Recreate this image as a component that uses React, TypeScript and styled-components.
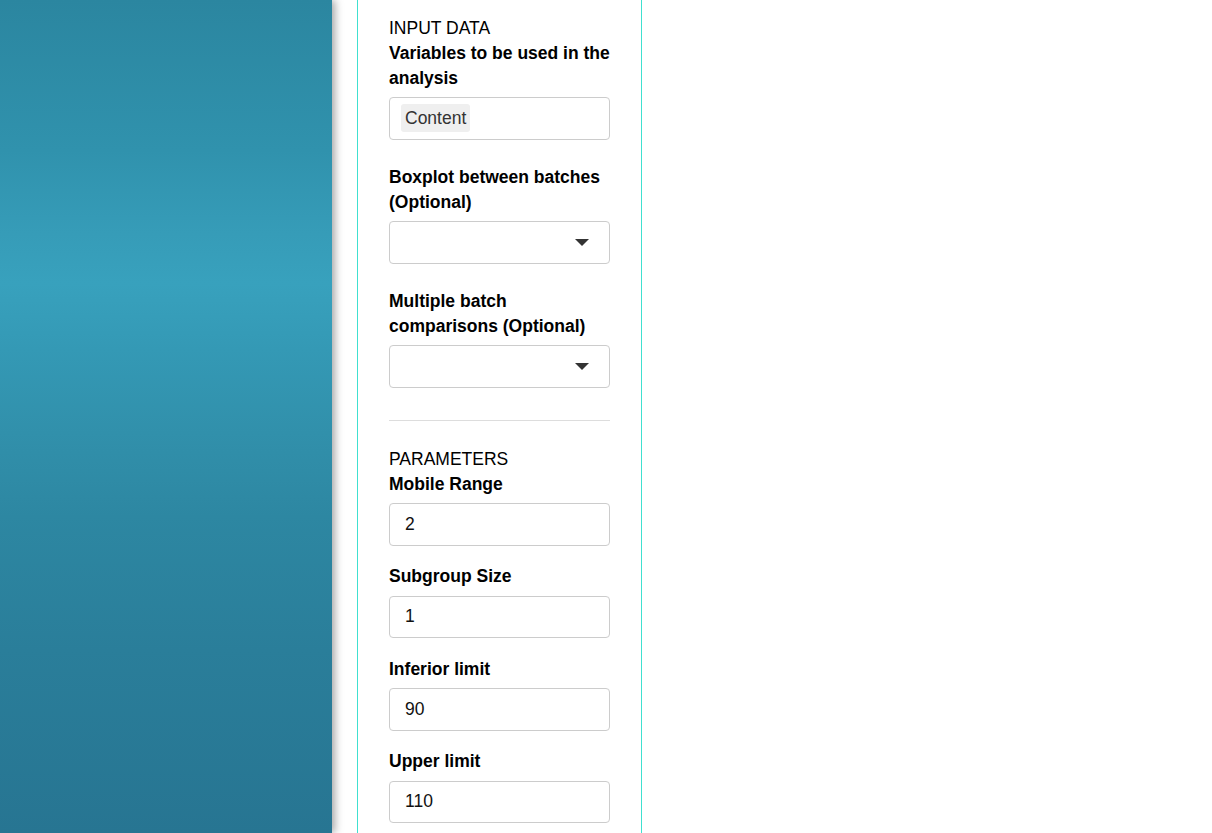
import React from 'react';
import styled, {createGlobalStyle} from "styled-components";

const GlobalStyle = createGlobalStyle`
  html, body {
    margin: 0;
    padding: 0;
    background: #fff;
  }
  body {
    font-family: "Liberation Sans", Arial, sans-serif;
    font-size: 17.5px;
    color: #000;
  }
`

type Field = {label: string, value: string}

const params: Field[] = [
    {label: "Mobile Range", value: "2"},
    {label: "Subgroup Size", value: "1"},
    {label: "Inferior limit", value: "90"},
    {label: "Upper limit", value: "110"},
]

const Caret = () => (
    <svg width="14" height="7" viewBox="0 0 14 7">
        <path d="M0 0 L14 0 L7 7 Z" fill="#333"/>
    </svg>
)

export default function App() {
    return (
        <Page>
            <GlobalStyle/>
            <Sidebar/>
            <Panel>
                <Section>
                    <Heading>INPUT DATA</Heading>
                    <Group gap={25.5}>
                        <Label>Variables to be used in the analysis</Label>
                        <Box>
                            <Chip>Content</Chip>
                        </Box>
                    </Group>
                    <Group gap={25.5}>
                        <Label>Boxplot between batches (Optional)</Label>
                        <Box>
                            <Spacer/>
                            <Caret/>
                        </Box>
                    </Group>
                    <Group gap={0}>
                        <Label>Multiple batch comparisons (Optional)</Label>
                        <Box>
                            <Spacer/>
                            <Caret/>
                        </Box>
                    </Group>
                </Section>
                <Divider/>
                <Section>
                    <Heading>PARAMETERS</Heading>
                    {params.map((p) => (
                        <Group key={p.label} gap={18.5} inner={6.5}>
                            <Label>{p.label}</Label>
                            <Box>{p.value}</Box>
                        </Group>
                    ))}
                </Section>
            </Panel>
        </Page>
    );
}

const Page = styled.div`
  display: flex;
  height: 833px;
  overflow: hidden;
`

const Sidebar = styled.div`
  width: 332px;
  flex-shrink: 0;
  height: 100%;
  background: linear-gradient(180deg, #2b86a0 0%, #3092ad 18%, #369cb8 28%, #38a1bd 34%, #3499b5 42%, #3190ab 52%, #2d87a2 62%, #2a7e9a 78%, #277592 100%);
  box-shadow: 3px 0 8px rgba(0, 0, 0, 0.35);
  position: relative;
  z-index: 1;
`

const Panel = styled.div`
  margin-left: 25px;
  width: 221px;
  padding: 16px 31px 0;
  border-left: 1px solid #40e0d0;
  border-right: 1px solid #40e0d0;
  height: 100%;
`

const Section = styled.div`
  display: flex;
  flex-direction: column;
`

const Heading = styled.div`
  line-height: 25px;
`

const Group = styled.div<{gap: number, inner?: number}>`
  display: flex;
  flex-direction: column;
  gap: ${p => p.inner ?? 6}px;
  margin-bottom: ${p => p.gap}px;
`

const Label = styled.div`
  font-weight: 700;
  line-height: 25px;
`

const Box = styled.div`
  box-sizing: border-box;
  height: 42.5px;
  border: 1px solid #ccc;
  border-radius: 4px;
  display: flex;
  align-items: center;
  padding: 0 20px 0 15px;
  color: #111;
  
  &:has(> span:first-child){
    padding-left: 11px;
  }
`

const Chip = styled.span`
  background: #efefef;
  border-radius: 3px;
  padding: 3px 4px;
  line-height: 22px;
  color: #333;
`

const Spacer = styled.span`
  flex: 1;
`

const Divider = styled.hr`
  border: none;
  border-top: 1px solid #ddd;
  margin: 32px 0 26px;
`
